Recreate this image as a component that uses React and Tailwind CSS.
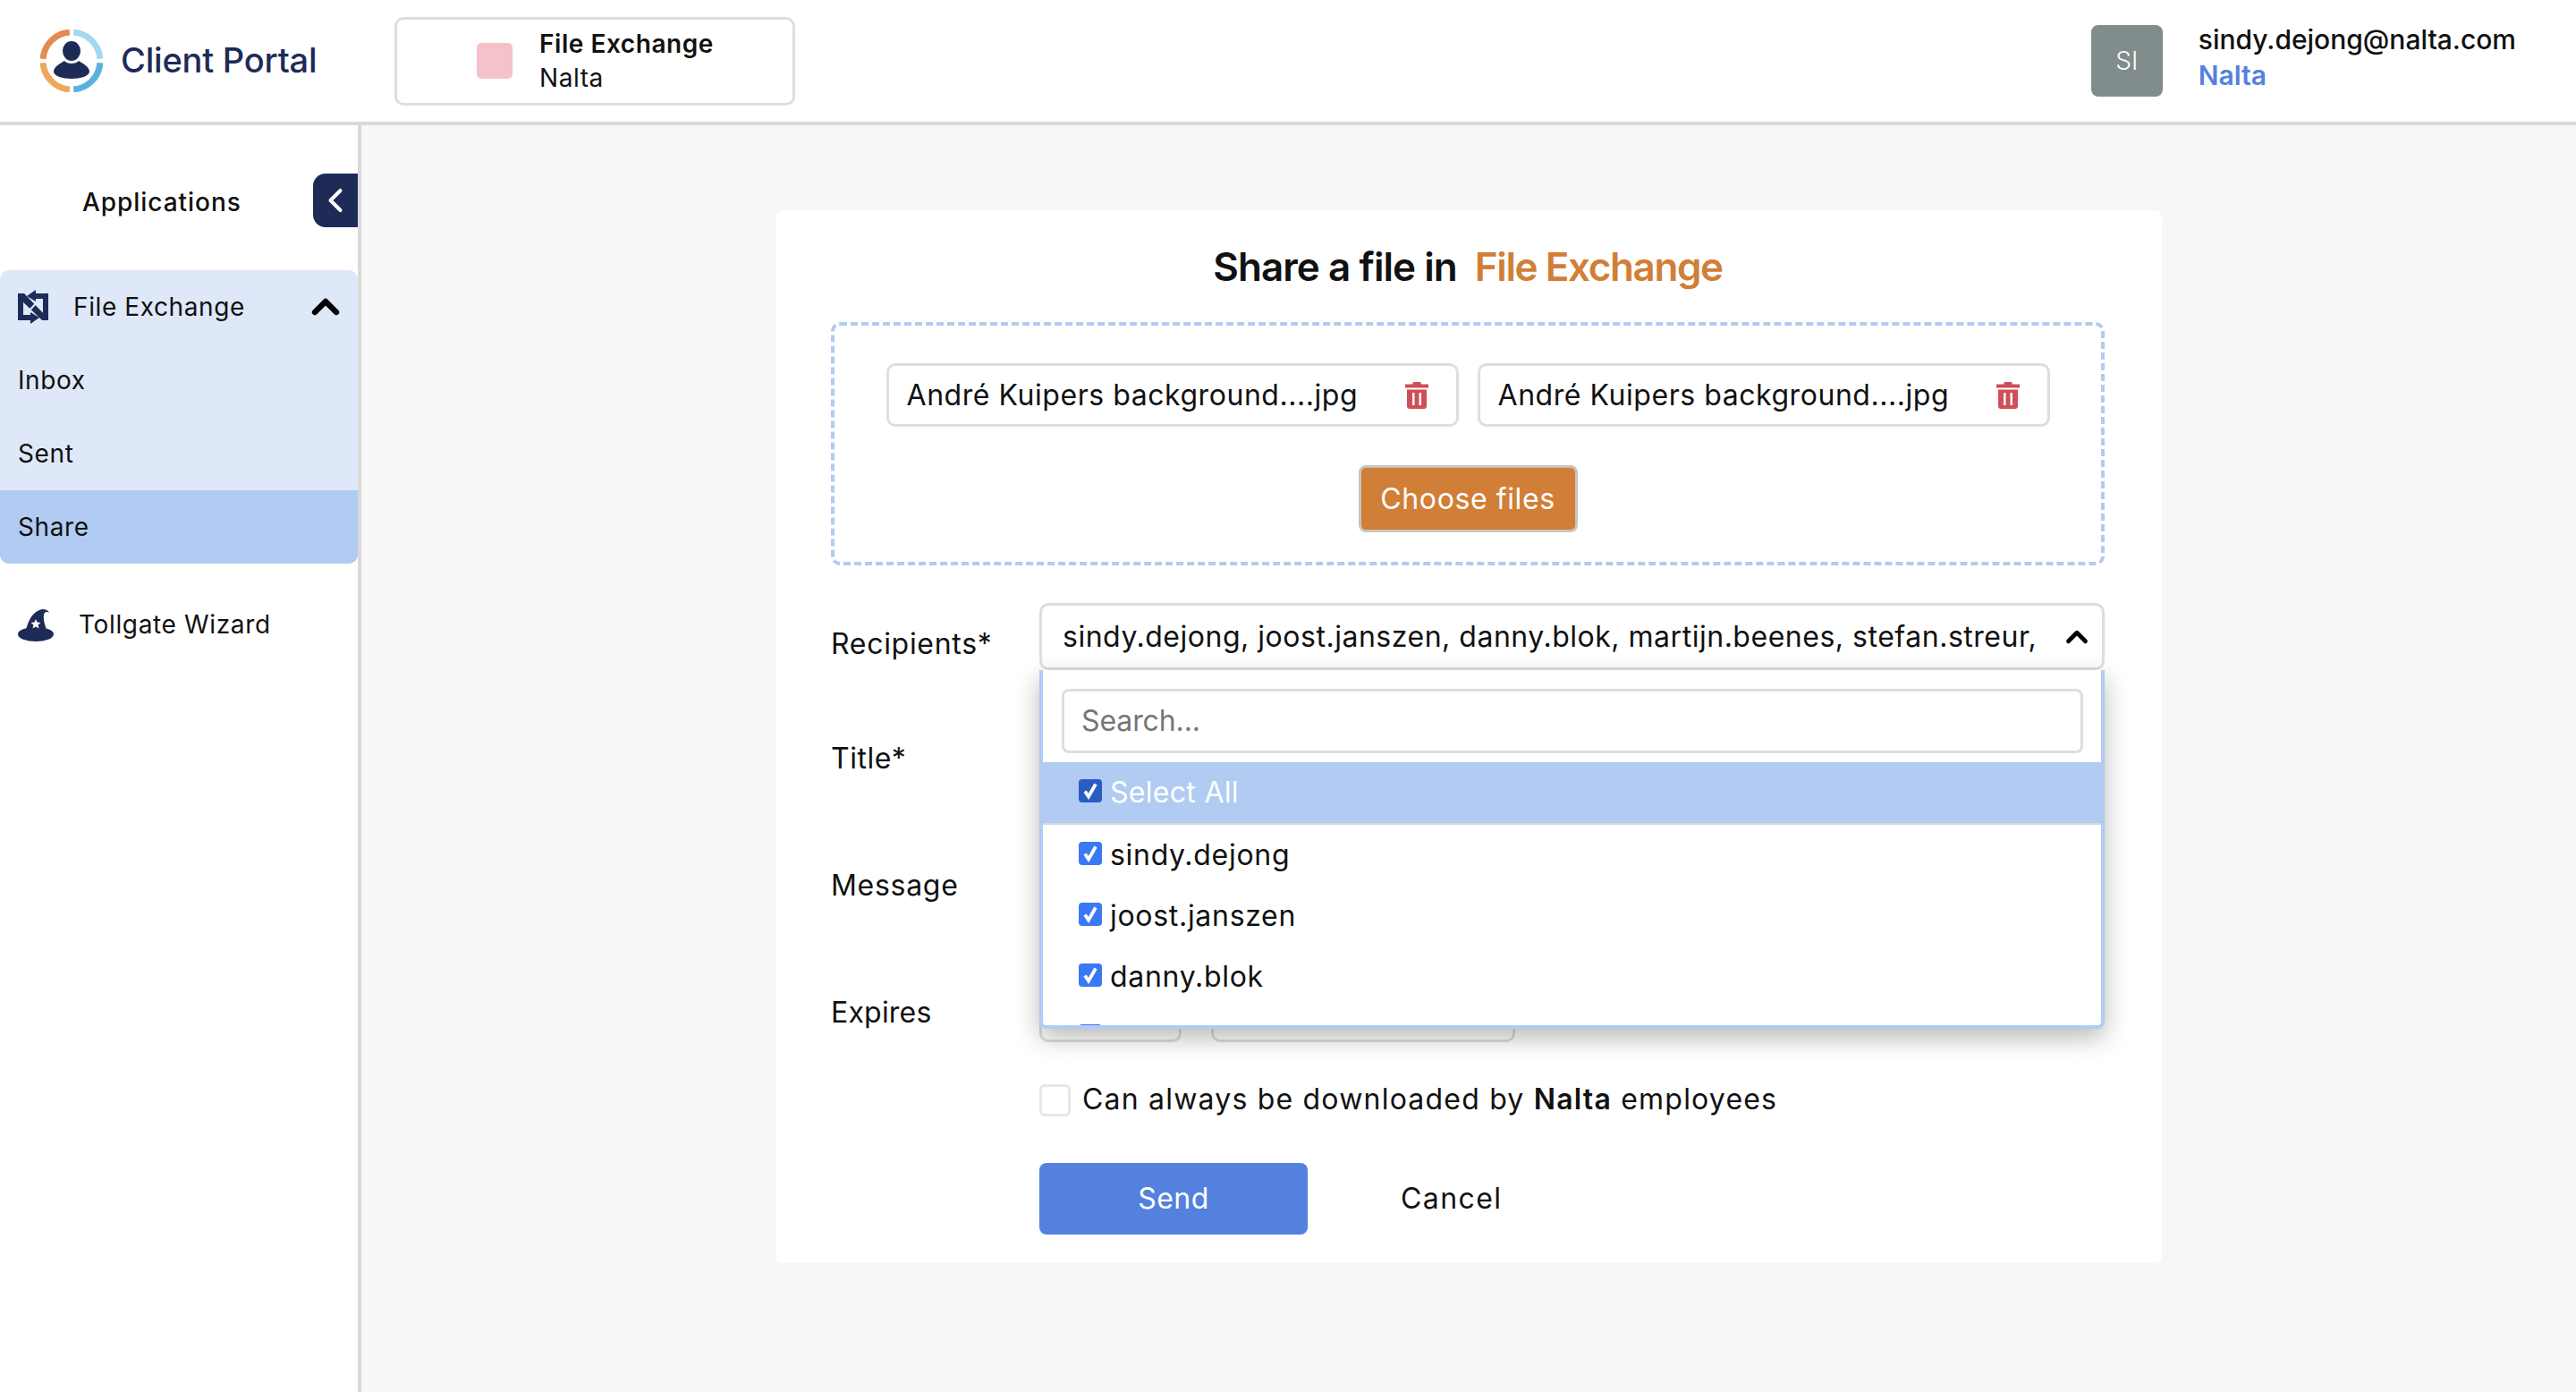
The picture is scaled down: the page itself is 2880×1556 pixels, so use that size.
import React from "react";
import { ChevronUp, ChevronLeft } from "lucide-react";

function Logo() {
  return (
    <svg viewBox="0 0 70 70" className="w-[70px] h-[70px] shrink-0">
      <g fill="none" strokeWidth="7">
        <path d="M3.1 32.8A32 32 0 0 1 32.8 3.1" stroke="#e58a52" />
        <path d="M37.2 3.1A32 32 0 0 1 66.9 32.8" stroke="#a3d8f0" />
        <path d="M3.1 37.2A32 32 0 0 0 32.8 66.9" stroke="#f0a75c" />
        <path d="M66.9 37.2A32 32 0 0 1 37.2 66.9" stroke="#5bb0e0" />
      </g>
      <ellipse cx="35" cy="24" rx="10" ry="11" fill="#1e2b56" />
      <path d="M15 47C15 42 22 38 27 35C30 39 40 39 43 35C48 38 55 42 55 47C55 52 45 55 35 55C25 55 15 52 15 47Z" fill="#1e2b56" />
    </svg>
  );
}

function ExchangeIcon() {
  return (
    <svg viewBox="0 0 34 38" className="w-[34px] h-[38px] shrink-0" fill="#1e2b56">
      <path d="M0 4H7L34 32V34H27L0 8Z" />
      <path d="M0 4H6V28H14V34H0Z" />
      <path d="M14 25L24 31L14 38Z" />
      <path d="M34 34H28V10H20V4H34Z" />
      <path d="M20 0L10 7L20 13Z" />
      <path d="M11 25L23 12" stroke="#dfe8f8" strokeWidth="2" fill="none" />
    </svg>
  );
}

function HatIcon() {
  return (
    <svg viewBox="0 0 40 37" className="w-[40px] h-[37px] shrink-0" fill="#1e2b56">
      <ellipse cx="20" cy="29" rx="20" ry="8" />
      <path d="M8 27C11 17 14 6 24 2C28 0 33 1 35 5C32 3 29 4 29 8C28 14 31 20 33 27Z" />
      <path fill="#fff" d="M20 12L21.6 15.6L25.5 16L22.6 18.6L23.4 22.4L20 20.4L16.6 22.4L17.4 18.6L14.5 16L18.4 15.6Z" />
    </svg>
  );
}

function Trash() {
  return (
    <svg viewBox="0 0 26 30" className="w-[26px] h-[30px] shrink-0">
      <path fill="#cf4f58" fillRule="evenodd" d="M8 2.5L9 0H17L18 2.5H26V6.5H0V2.5ZM2 8.5H24V27C24 28.7 22.7 30 21 30H5C3.3 30 2 28.7 2 27ZM8 12V26H10.5V12ZM15.5 12V26H18V12Z" />
    </svg>
  );
}

function Check({ dark }) {
  return (
    <span className={`w-[26px] h-[26px] -mt-[4px] rounded-[4px] shrink-0 flex items-center justify-center ${dark ? "bg-[#2a5cc4]" : "bg-[#3b78f5]"}`}>
      <svg viewBox="0 0 26 26" className="w-[26px] h-[26px]">
        <path d="M7 13.5L11 19.5L19 5.5" fill="none" stroke="#fff" strokeWidth="3.8" />
      </svg>
    </span>
  );
}

function FileChip() {
  return (
    <div className="w-[640px] h-[71px] border-[3px] border-[#dedede] rounded-[10px] flex items-center justify-between pl-[20px] pr-[31px] text-[32px] tracking-[0.55px]">
      <span>André Kuipers background....jpg</span>
      <Trash />
    </div>
  );
}

function Option({ label }) {
  return (
    <div className="h-[68px] flex items-center gap-[9px] pl-[40px] text-[32px] tracking-[0.7px]">
      <Check />
      {label && <span>{label}</span>}
    </div>
  );
}

export default function App() {
  return (
    <div className="font-['Inter',sans-serif] w-[2880px] h-[1556px] overflow-hidden flex flex-col bg-[#f7f7f7] text-[#111]">
      <header className="h-[140px] shrink-0 bg-white border-b-4 border-[#d9d9d9] flex items-center">
        <div className="ml-[45px] w-[396px] flex items-center gap-[20px]">
          <Logo />
          <span className="text-[38px] font-medium text-[#1e2b56] tracking-[-0.2px] pb-[2px]">Client Portal</span>
        </div>
        <div className="w-[448px] h-[99px] border-[3px] border-[#dedede] rounded-[10px] flex items-center pl-[89px] gap-[30px]">
          <span className="w-[40px] h-[40px] bg-[#f5c2cc] rounded-[5px]" />
          <div className="flex flex-col leading-[38px] tracking-[0.55px] pb-[1px]">
            <span className="text-[28px] font-semibold">File Exchange</span>
            <span className="text-[28px]">Nalta</span>
          </div>
        </div>
        <div className="ml-auto flex items-center gap-[40px] mr-[67px]">
          <span className="w-[80px] h-[80px] bg-[#818d8c] rounded-[8px] flex items-center justify-center text-white text-[28px] font-light">SI</span>
          <div className="flex flex-col leading-[40px] pb-[8px]">
            <span className="text-[30px] font-medium">sindy.dejong@nalta.com</span>
            <span className="text-[30px] font-semibold text-[#5481de]">Nalta</span>
          </div>
        </div>
      </header>

      <div className="flex flex-1 min-h-0">
        <aside className="w-[404px] shrink-0 bg-white border-r-4 border-[#d9d9d9] flex flex-col">
          <div className="h-[162px] shrink-0 flex pt-[54px] items-start">
            <span className="ml-[92px] w-[258px] text-[28px] font-medium leading-[64px] tracking-[0.95px]">Applications</span>
            <button className="w-[50px] h-[60px] bg-[#1e2b56] rounded-l-[14px] flex items-center justify-center text-white">
              <ChevronLeft size={44} strokeWidth={2.2} />
            </button>
          </div>
          <div className="h-[328px] shrink-0 bg-[#dfe8f8] rounded-[10px] overflow-hidden flex flex-col text-[28px] tracking-[0.6px]">
            <div className="h-[82px] flex items-center pl-[20px] pr-[12px]">
              <ExchangeIcon />
              <span className="ml-[28px] pb-[1px]">File Exchange</span>
              <ChevronUp size={48} strokeWidth={3.2} className="ml-auto text-black" />
            </div>
            <div className="h-[82px] flex items-center pl-[20px] pb-[1px]">Inbox</div>
            <div className="h-[82px] flex items-center pl-[20px] pb-[1px]">Sent</div>
            <div className="h-[82px] flex items-center pl-[20px] pb-[1px] bg-[#b1cbf3]">Share</div>
          </div>
          <div className="mt-[36px] flex items-center pl-[20px] gap-[28px] text-[28px] tracking-[0.65px] h-[64px]">
            <HatIcon />
            <span>Tollgate Wizard</span>
          </div>
        </aside>

        <main className="flex-1 flex justify-center items-start">
          <section className="mt-[95px] w-[1550px] h-[1177px] bg-white rounded-[8px] flex flex-col pl-[62px]">
            <h1 className="w-[1424px] h-[125px] shrink-0 flex items-center justify-center gap-[20px] text-[44px] font-semibold">
              <span className="tracking-[-0.95px]">Share a file in</span>
              <span className="text-[#d17e37] tracking-[-1.4px]">File Exchange</span>
            </h1>

            <div className="w-[1424px] h-[272px] shrink-0 border-4 border-dashed border-[#b1cbf3] rounded-[10px] pt-[42px] flex flex-col items-center">
              <div className="flex gap-[21px]">
                <FileChip />
                <FileChip />
              </div>
              <button className="mt-[43px] w-[245px] h-[75px] bg-[#d17e37] border-[3px] border-[#c9c4bd] rounded-[8px] text-white text-[32px] tracking-[0.6px]">Choose files</button>
            </div>

            <div className="mt-[42px] w-[1424px] grid grid-cols-[233px_1fr] text-[32px] tracking-[0.5px]">
              <div className="h-[75px] pt-[22px] tracking-[0.7px]">Recipients*</div>
              <div className="relative h-[75px]">
                <div className="h-[75px] border-[3px] border-[#dedede] rounded-[10px] flex items-center justify-between pl-[23px] pr-[9px]">
                  <span className="whitespace-nowrap tracking-[0.52px]">sindy.dejong, joost.janszen, danny.blok, martijn.beenes, stefan.streur,</span>
                  <ChevronUp size={38} strokeWidth={3} className="shrink-0 text-black" />
                </div>
                <div className="absolute z-10 left-0 right-0 top-[75px] h-[401px] bg-white border-4 border-t-0 border-[#b1cbf3] rounded-b-[8px] overflow-hidden shadow-[0_10px_28px_rgba(0,0,0,0.28)]">
                  <div className="h-[103px] pt-[21px] pl-[21px] pr-[20px]">
                    <div className="h-[72px] border-[3px] border-[#dedede] rounded-[8px] flex items-center pl-[19px] text-[#767676] tracking-[-0.1px]">Search...</div>
                  </div>
                  <div className="h-[70px] bg-[#b1cbf3] border-b-2 border-[#d9d9d9] flex items-center gap-[9px] pl-[40px] text-white tracking-[0.3px]">
                    <Check dark />
                    <span>Select All</span>
                  </div>
                  <Option label="sindy.dejong" />
                  <Option label="joost.janszen" />
                  <Option label="danny.blok" />
                  <Option />
                </div>
              </div>

              <div className="mt-[61px] h-[75px] flex items-center">Title*</div>
              <div className="mt-[61px] h-[75px] border-[3px] border-[#dedede] rounded-[10px]" />

              <div className="mt-[30px] h-[150px] flex items-center tracking-[0.7px]">Message</div>
              <div className="mt-[30px] h-[150px] border-[3px] border-[#dedede] rounded-[10px]" />

              <div className="mt-[30px] h-[70px] pt-[4px] flex items-center tracking-[0.2px]">Expires</div>
              <div className="mt-[30px] h-[70px] flex gap-[33px]">
                <div className="w-[159px] border-[3px] border-[#dedede] rounded-[10px]" />
                <div className="w-[340px] border-[3px] border-[#dedede] rounded-[10px]" />
              </div>

              <div />
              <div className="mt-[47px] h-[36px] flex items-center gap-[13px]">
                <span className="w-[35px] h-[36px] border-[3px] border-[#e3e6ea] rounded-[6px]" />
                <span className="pb-[3px] tracking-[1.2px]">Can always be downloaded by <b className="font-semibold">Nalta</b> employees</span>
              </div>

              <div />
              <div className="mt-[52px] h-[80px] flex items-center">
                <button className="w-[300px] h-[80px] bg-[#5481de] rounded-[8px] text-white">Send</button>
                <span className="ml-[104px] tracking-[1.4px]">Cancel</span>
              </div>
            </div>
          </section>
        </main>
      </div>
    </div>
  );
}
